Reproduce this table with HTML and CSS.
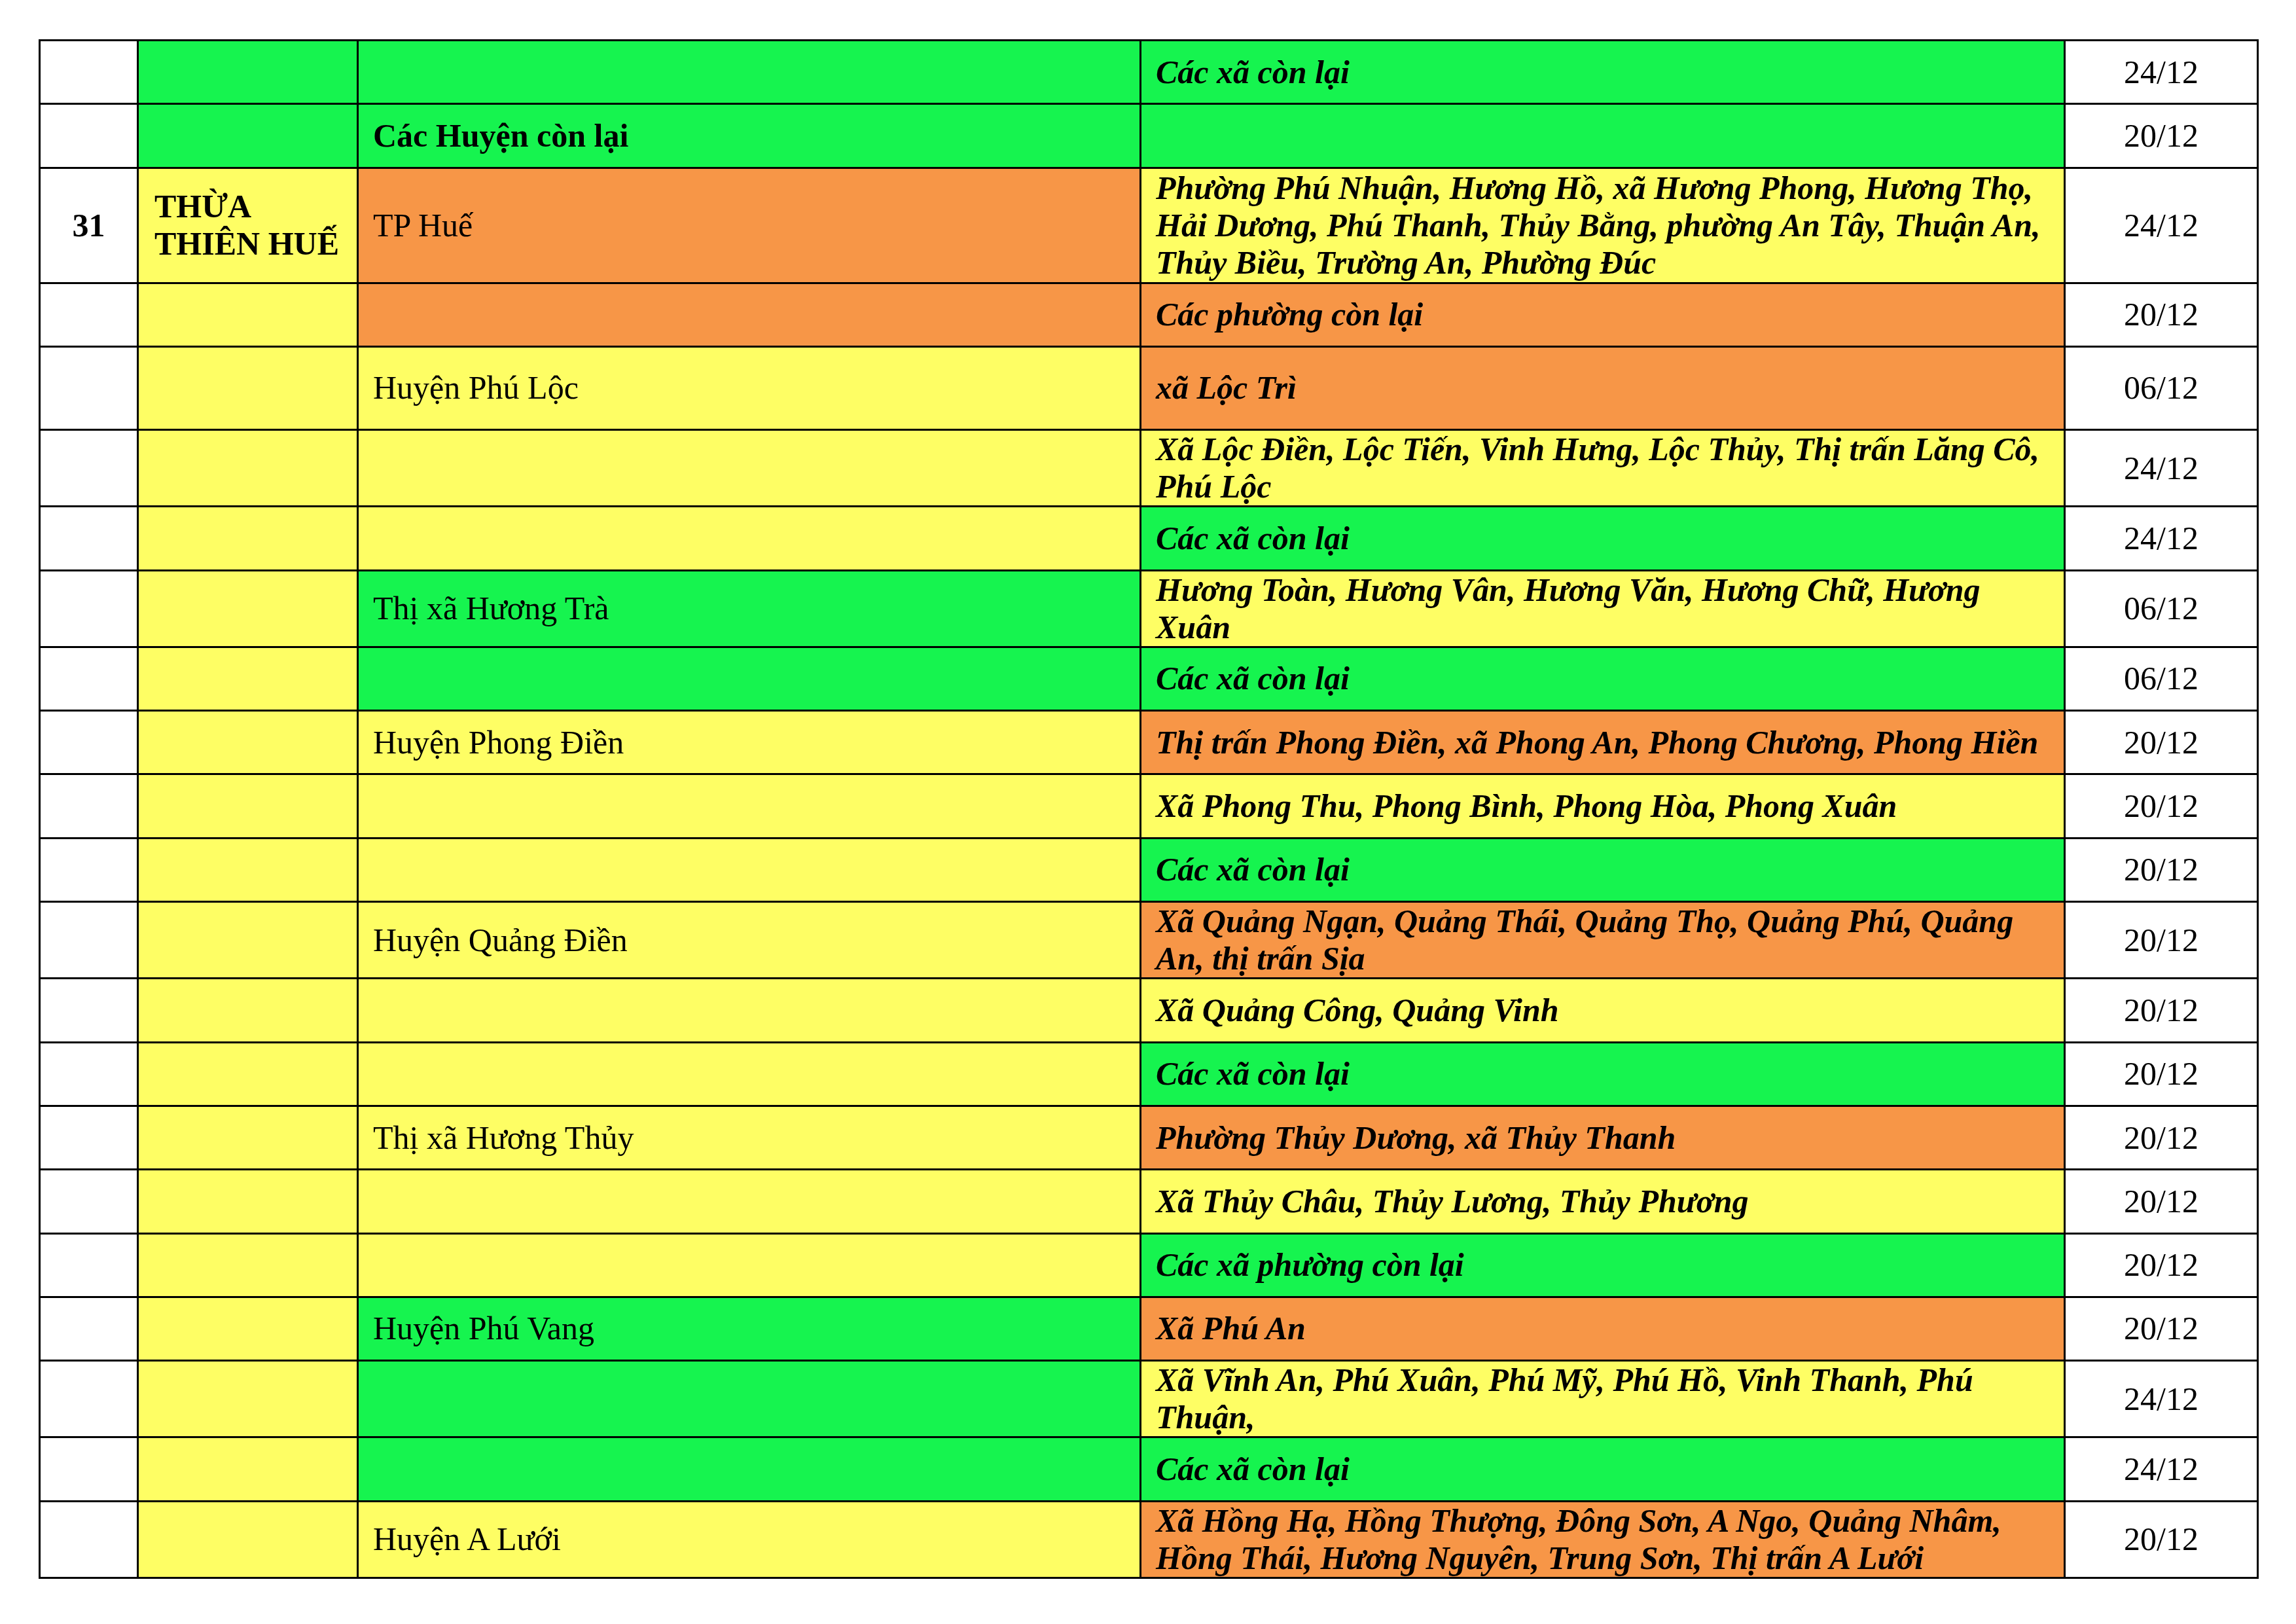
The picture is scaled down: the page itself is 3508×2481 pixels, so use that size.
FILE: index.html
```html
<!DOCTYPE html>
<html lang="vi">
<head>
<meta charset="utf-8">
<title>Bảng phân vùng</title>
<link rel="stylesheet" href="styles.css">
</head>
<body>
<div class="page">
<table class="grid">
  <colgroup>
    <col class="c-no">
    <col class="c-prov">
    <col class="c-dist">
    <col class="c-ward">
    <col class="c-date">
  </colgroup>
  <tbody>
    <tr class="h1"><td class="no"></td><td class="prov g"></td><td class="dist g"></td><td class="ward g">Các xã còn lại</td><td class="date">24/12</td></tr>
    <tr class="h1"><td class="no"></td><td class="prov g"></td><td class="dist g strong">Các Huyện còn lại</td><td class="ward g"></td><td class="date">20/12</td></tr>
    <tr class="h3"><td class="no">31</td><td class="prov y">THỪA THIÊN HUẾ</td><td class="dist o">TP Huế</td><td class="ward y">Phường Phú Nhuận, Hương Hồ, xã Hương Phong, Hương Thọ, Hải Dương, Phú Thanh, Thủy Bằng, phường An Tây, Thuận An, Thủy Biều, Trường An, Phường Đúc</td><td class="date">24/12</td></tr>
    <tr class="h1"><td class="no"></td><td class="prov y"></td><td class="dist o"></td><td class="ward o">Các phường còn lại</td><td class="date">20/12</td></tr>
    <tr class="ht"><td class="no"></td><td class="prov y"></td><td class="dist y">Huyện Phú Lộc</td><td class="ward o">xã Lộc Trì</td><td class="date">06/12</td></tr>
    <tr class="h2"><td class="no"></td><td class="prov y"></td><td class="dist y"></td><td class="ward y">Xã Lộc Điền, Lộc Tiến, Vinh Hưng, Lộc Thủy, Thị trấn Lăng Cô, Phú Lộc</td><td class="date">24/12</td></tr>
    <tr class="h1"><td class="no"></td><td class="prov y"></td><td class="dist y"></td><td class="ward g">Các xã còn lại</td><td class="date">24/12</td></tr>
    <tr class="h2"><td class="no"></td><td class="prov y"></td><td class="dist g">Thị xã Hương Trà</td><td class="ward y">Hương Toàn, Hương Vân, Hương Văn, Hương Chữ, Hương Xuân</td><td class="date">06/12</td></tr>
    <tr class="h1"><td class="no"></td><td class="prov y"></td><td class="dist g"></td><td class="ward g">Các xã còn lại</td><td class="date">06/12</td></tr>
    <tr class="h1"><td class="no"></td><td class="prov y"></td><td class="dist y">Huyện Phong Điền</td><td class="ward o">Thị trấn Phong Điền, xã Phong An, Phong Chương, Phong Hiền</td><td class="date">20/12</td></tr>
    <tr class="h1"><td class="no"></td><td class="prov y"></td><td class="dist y"></td><td class="ward y">Xã Phong Thu, Phong Bình, Phong Hòa, Phong Xuân</td><td class="date">20/12</td></tr>
    <tr class="h1"><td class="no"></td><td class="prov y"></td><td class="dist y"></td><td class="ward g">Các xã còn lại</td><td class="date">20/12</td></tr>
    <tr class="h2"><td class="no"></td><td class="prov y"></td><td class="dist y">Huyện Quảng Điền</td><td class="ward o">Xã Quảng Ngạn, Quảng Thái, Quảng Thọ, Quảng Phú, Quảng An, thị trấn Sịa</td><td class="date">20/12</td></tr>
    <tr class="h1"><td class="no"></td><td class="prov y"></td><td class="dist y"></td><td class="ward y">Xã Quảng Công, Quảng Vinh</td><td class="date">20/12</td></tr>
    <tr class="h1"><td class="no"></td><td class="prov y"></td><td class="dist y"></td><td class="ward g">Các xã còn lại</td><td class="date">20/12</td></tr>
    <tr class="h1"><td class="no"></td><td class="prov y"></td><td class="dist y">Thị xã Hương Thủy</td><td class="ward o">Phường Thủy Dương, xã Thủy Thanh</td><td class="date">20/12</td></tr>
    <tr class="h1"><td class="no"></td><td class="prov y"></td><td class="dist y"></td><td class="ward y">Xã Thủy Châu, Thủy Lương, Thủy Phương</td><td class="date">20/12</td></tr>
    <tr class="h1"><td class="no"></td><td class="prov y"></td><td class="dist y"></td><td class="ward g">Các xã phường còn lại</td><td class="date">20/12</td></tr>
    <tr class="h1"><td class="no"></td><td class="prov y"></td><td class="dist g">Huyện Phú Vang</td><td class="ward o">Xã Phú An</td><td class="date">20/12</td></tr>
    <tr class="h2"><td class="no"></td><td class="prov y"></td><td class="dist g"></td><td class="ward y">Xã Vĩnh An, Phú Xuân, Phú Mỹ, Phú Hồ, Vinh Thanh, Phú Thuận,</td><td class="date">24/12</td></tr>
    <tr class="h1"><td class="no"></td><td class="prov y"></td><td class="dist g"></td><td class="ward g">Các xã còn lại</td><td class="date">24/12</td></tr>
    <tr class="h2"><td class="no"></td><td class="prov y"></td><td class="dist y">Huyện A Lưới</td><td class="ward o">Xã Hồng Hạ, Hồng Thượng, Đông Sơn, A Ngo, Quảng Nhâm, Hồng Thái, Hương Nguyên, Trung Sơn, Thị trấn A Lưới</td><td class="date">20/12</td></tr>
  </tbody>
</table>
</div>
</body>
</html>
```

FILE: styles.css
```css
html, body {
  margin: 0;
  padding: 0;
  background: #ffffff;
}

.page {
  padding: 60px 0 0 59px;
}

.grid {
  border-collapse: separate;
  border-spacing: 0;
  table-layout: fixed;
  width: 3392px;
  border-top: 3px solid #000;
  border-left: 3px solid #000;
  font-family: "Liberation Serif", "Times New Roman", serif;
  font-size: 50px;
  line-height: 57px;
  color: #000;
}

.c-no { width: 150px; }
.c-prov { width: 336px; }
.c-dist { width: 1196px; }
.c-ward { width: 1412px; }
.c-date { width: 295px; }

.grid td {
  box-sizing: border-box;
  border-right: 3px solid #000;
  border-bottom: 3px solid #000;
  padding: 0 8px 0 22px;
  vertical-align: middle;
  background: #ffffff;
}

.h1 { height: 97.33px; }
.h2 { height: 117.2px; }
.h3 { height: 176px; }
.ht { height: 127px; }

.grid td.no {
  text-align: center;
  font-weight: bold;
  padding: 0;
}

.grid td.prov {
  font-weight: bold;
  padding-left: 24px;
}

.grid td.dist.strong {
  font-weight: bold;
}

.grid td.ward {
  font-weight: bold;
  font-style: italic;
}

.grid td.date {
  text-align: center;
  padding: 0;
}

.grid td.g { background: #16F44F; }
.grid td.y { background: #FEFE64; }
.grid td.o { background: #F79647; }
```
